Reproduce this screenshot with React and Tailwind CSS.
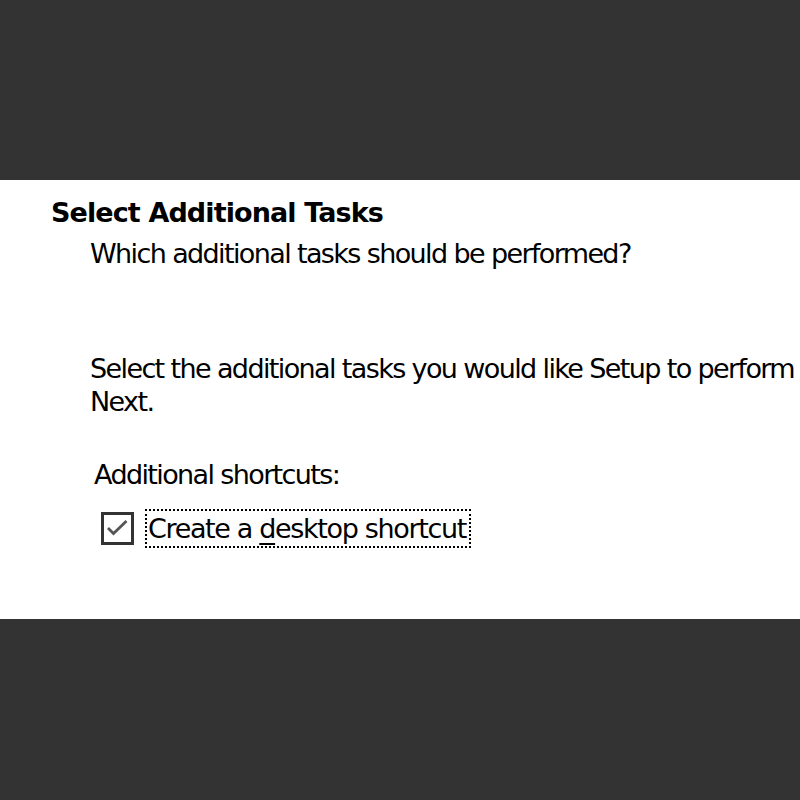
import React from 'react';

const font = { fontFamily: '"DejaVu Sans", Verdana, sans-serif' };

const CheckBox = () => (
  <div className="w-[33px] h-[33px] border-[3px] border-[#333] bg-white flex items-center justify-center">
    <svg width="27" height="27" viewBox="0 0 27 27" fill="none">
      <path d="M4 13 L9.5 18.5 L22.5 6" stroke="#555" strokeWidth="2.8" strokeLinejoin="miter" />
    </svg>
  </div>
);

export default function App() {
  return (
    <div className="h-[800px] flex flex-col bg-[#333333] overflow-hidden">
      <div className="h-[180px] shrink-0" />
      <div
        className="h-[439px] shrink-0 bg-white text-black text-[27px] leading-[33px] tracking-[-0.06em] whitespace-nowrap overflow-hidden pt-[16px]"
        style={font}
      >
        <div className="pl-[51px] font-bold tracking-[-0.033em]">Select Additional Tasks</div>
        <div className="pl-[90px] mt-[8px]">Which additional tasks should be performed?</div>
        <div className="pl-[90px] mt-[82px]">
          <div>Select the additional tasks you would like Setup to perform</div>
          <div>Next.</div>
        </div>
        <div className="pl-[94px] mt-[40px]">Additional shortcuts:</div>
        <div className="pl-[101px] mt-[18px] flex items-center gap-[11px]">
          <CheckBox />
          <div className="border-2 border-dotted border-black pl-px pr-[3px] py-px tracking-[-0.05em]">
            Create a <span className="underline decoration-2 underline-offset-[5px]">d</span>esktop shortcut
          </div>
        </div>
      </div>
      <div className="flex-1" />
    </div>
  );
}
